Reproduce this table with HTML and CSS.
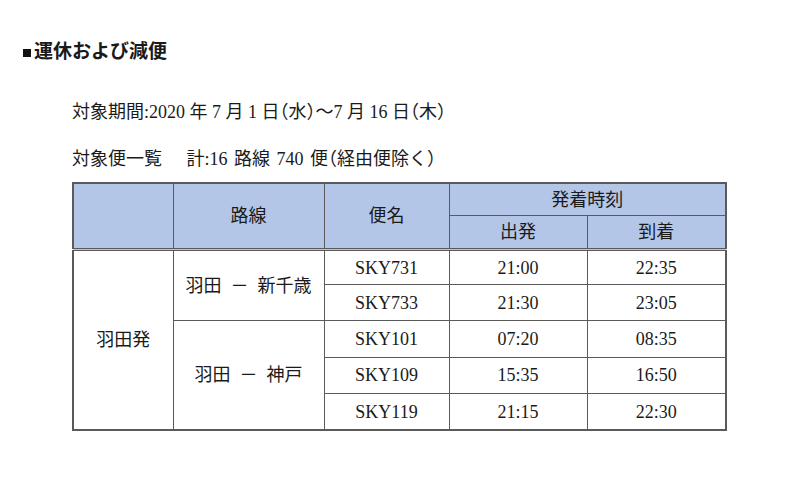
FILE: index.html
```html
<!DOCTYPE html>
<html lang="ja">
<head>
<meta charset="utf-8">
<link rel="stylesheet" href="styles.css">
</head>
<body>
<h2 class="heading"><span class="sq"></span>運休および減便</h2>
<p class="line first">対象期間:2020 年 7 月 1 日<span class="hw">（</span>水<span class="hw">）</span>～7 月 16 日<span class="hw">（</span>木<span class="hw">）</span></p>
<p class="line second">対象便一覧　 計:16 路線 740 便<span class="hw">（</span>経由便除く<span class="hw">）</span></p>
<table class="flights">
  <colgroup>
    <col class="c1"><col class="c2"><col class="c3"><col class="c4"><col class="c5">
  </colgroup>
  <thead>
    <tr class="h1">
      <th rowspan="2"></th>
      <th rowspan="2">路線</th>
      <th rowspan="2">便名</th>
      <th colspan="2">発着時刻</th>
    </tr>
    <tr class="h2">
      <th>出発</th>
      <th>到着</th>
    </tr>
  </thead>
  <tbody>
    <tr class="r1">
      <td rowspan="5">羽田発</td>
      <td rowspan="2">羽田&nbsp;&nbsp;－&nbsp;&nbsp;新千歳</td>
      <td>SKY731</td><td>21:00</td><td>22:35</td>
    </tr>
    <tr><td>SKY733</td><td>21:30</td><td>23:05</td></tr>
    <tr>
      <td rowspan="3">羽田&nbsp;&nbsp;－&nbsp;&nbsp;神戸</td>
      <td>SKY101</td><td>07:20</td><td>08:35</td>
    </tr>
    <tr><td>SKY109</td><td>15:35</td><td>16:50</td></tr>
    <tr><td>SKY119</td><td>21:15</td><td>22:30</td></tr>
  </tbody>
</table>
</body>
</html>
```

FILE: styles.css
```css
html, body {
  margin: 0;
  padding: 0;
  background: #ffffff;
}
body {
  font-family: "Liberation Serif", "Noto Sans CJK JP", serif;
  color: #1a1a1a;
  width: 800px;
  height: 484px;
  overflow: hidden;
}
.heading {
  margin: 0;
  padding: 40px 0 0 22px;
  font-family: "Noto Sans CJK JP", sans-serif;
  font-weight: bold;
  font-size: 19px;
  line-height: 20px;
  height: 20px;
  display: flex;
  align-items: center;
}
.sq {
  display: inline-block;
  width: 8px;
  height: 8px;
  background: #111;
  margin: 6px 3px 0 1px;
}
.line {
  margin: 0 0 0 72px;
  font-size: 18px;
  line-height: 24px;
  height: 24px;
  font-weight: normal;
}
.hw {
  font-family: "Noto Sans CJK JP", sans-serif;
  font-feature-settings: "halt";
}
.first {
  margin-top: 38px;
}
.second {
  margin-top: 23px;
  word-spacing: 2px;
}
.flights {
  margin: 13px 0 0 72px;
  border-collapse: collapse;
  width: 653px;
  table-layout: fixed;
  font-size: 18px;
  border: 2px solid #5a5a5a;
}
.c1 { width: 100px; }
.c2 { width: 151px; }
.c3 { width: 125px; }
.c4 { width: 138px; }
.c5 { width: 139px; }
.flights th,
.flights td {
  border: 1.5px solid #5a5a5a;
  text-align: center;
  vertical-align: middle;
  padding: 0;
  font-weight: normal;
  line-height: 20px;
}
.flights th {
  background: #b4c6e7;
}
.h1 th { height: 31px; }
.h2 th { height: 32px; }
.flights thead tr:last-child th,
.flights thead th[rowspan] {
  border-bottom: 3px double #5a5a5a;
}
.flights tbody tr {
  height: 36.4px;
}
.flights tbody tr.r1 {
  height: 35px;
}
```
